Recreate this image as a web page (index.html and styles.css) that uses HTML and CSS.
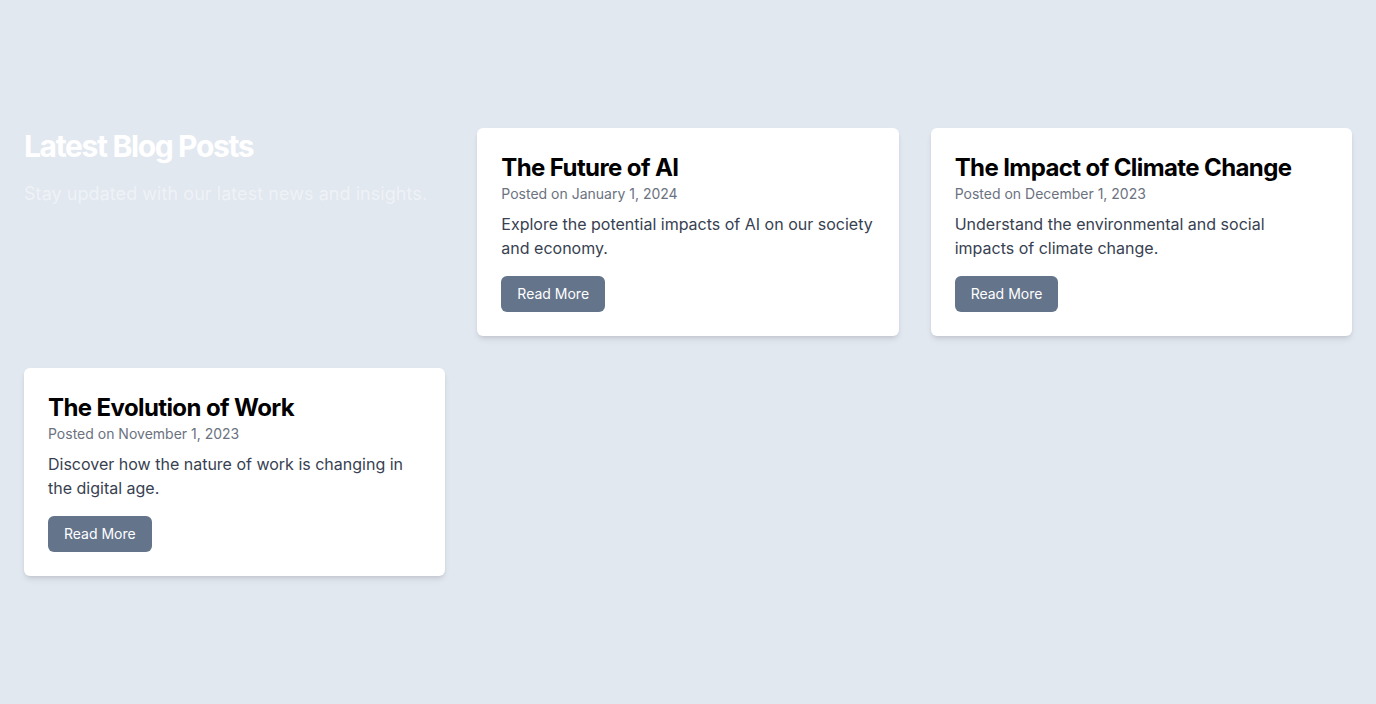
FILE: index.html
```html
<!DOCTYPE html>
<html lang="en">
<head>
<meta charset="utf-8">
<title>Latest Blog Posts</title>
<link rel="stylesheet" href="styles.css">
</head>
<body>
<main class="page">
  <div class="grid">
    <div class="intro">
      <h1 class="intro-title">Latest Blog Posts</h1>
      <p class="intro-sub">Stay updated with our latest news and insights.</p>
    </div>
    <article class="card">
      <h2 class="card-title">The Future of AI</h2>
      <p class="card-date">Posted on January 1, 2024</p>
      <p class="card-text">Explore the potential impacts of AI on our society and economy.</p>
      <a class="btn" href="#">Read More</a>
    </article>
    <article class="card">
      <h2 class="card-title">The Impact of Climate Change</h2>
      <p class="card-date">Posted on December 1, 2023</p>
      <p class="card-text">Understand the environmental and social impacts of climate change.</p>
      <a class="btn" href="#">Read More</a>
    </article>
    <article class="card">
      <h2 class="card-title">The Evolution of Work</h2>
      <p class="card-date">Posted on November 1, 2023</p>
      <p class="card-text">Discover how the nature of work is changing in the digital age.</p>
      <a class="btn" href="#">Read More</a>
    </article>
  </div>
</main>
</body>
</html>
```
FILE: styles.css
```css
* { box-sizing: border-box; }
html, body { margin: 0; padding: 0; }
body {
  background: #e2e8f0;
  font-family: Inter, "Noto Sans", sans-serif;
}
.page {
  min-height: 100vh;
  display: flex;
  flex-direction: column;
  justify-content: center;
  padding: 0 24px;
}
.grid {
  display: grid;
  grid-template-columns: repeat(3, 1fr);
  gap: 32px;
  align-items: start;
}
.intro-title {
  margin: 0;
  font-size: 30px;
  line-height: 36px;
  font-weight: 700;
  color: #ffffff;
  letter-spacing: -0.045em;
}
.intro-sub {
  margin: 16px 0 0;
  font-size: 18px;
  line-height: 28px;
  color: rgba(255, 255, 255, 0.45);
  letter-spacing: 0.003em;
}
.card {
  background: #ffffff;
  border-radius: 6px;
  padding: 24px;
  box-shadow: 0 4px 6px -1px rgba(0, 0, 0, 0.1), 0 2px 4px -2px rgba(0, 0, 0, 0.1);
}
.card-title {
  margin: 0;
  font-size: 24px;
  line-height: 32px;
  font-weight: 700;
  color: #000000;
  letter-spacing: -0.025em;
}
.card-date {
  margin: 0;
  font-size: 14px;
  line-height: 20px;
  color: #6b7280;
}
.card-text {
  margin: 8px 0 0;
  font-size: 16px;
  line-height: 24px;
  color: #374151;
}
.btn {
  display: inline-block;
  margin-top: 16px;
  padding: 8px 16px;
  font-size: 14px;
  line-height: 20px;
  color: #ffffff;
  background: #64748b;
  border-radius: 6px;
  text-decoration: none;
}
```
